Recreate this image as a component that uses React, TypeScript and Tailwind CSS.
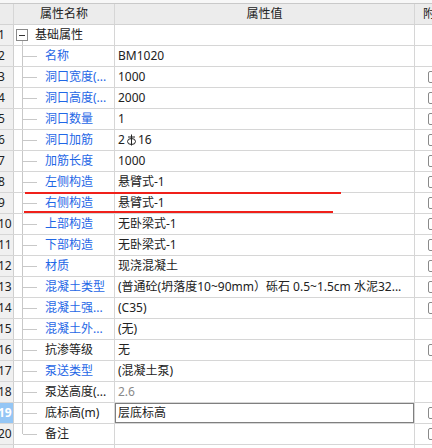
import React from "react";

type Row = {
    name: string;
    value?: React.ReactNode;
    blue?: boolean;
    muted?: boolean;
    check?: boolean;
};

const rows: Row[] = [
    { name: "名称", value: "BM1020", blue: true },
    { name: "洞口宽度(...", value: "1000", blue: true, check: true },
    { name: "洞口高度(...", value: "2000", blue: true, check: true },
    { name: "洞口数量", value: "1", blue: true, check: true },
    { name: "洞口加筋", value: "rebar", blue: true, check: true },
    { name: "加筋长度", value: "1000", blue: true, check: true },
    { name: "左侧构造", value: "悬臂式-1", blue: true, check: true },
    { name: "右侧构造", value: "悬臂式-1", blue: true, check: true },
    { name: "上部构造", value: "无卧梁式-1", blue: true, check: true },
    { name: "下部构造", value: "无卧梁式-1", blue: true, check: true },
    { name: "材质", value: "现浇混凝土", blue: true, check: true },
    { name: "混凝土类型", value: "(普通砼(坍落度10~90mm）砾石 0.5~1.5cm 水泥32...", blue: true, check: true },
    { name: "混凝土强...", value: "(C35)", blue: true, check: true },
    { name: "混凝土外...", value: "(无)", blue: true },
    { name: "抗渗等级", value: "无", check: true },
    { name: "泵送类型", value: "(混凝土泵)", blue: true },
    { name: "泵送高度(...", value: "2.6", muted: true },
    { name: "底标高(m)", value: "层底标高", check: true },
    { name: "备注", value: "", check: true },
];

// HRB400 rebar grade mark
const RebarMark = () => (
    <svg width="11" height="12" viewBox="0 0 11 12" className="inline-block mx-[1px] -mt-[2px] align-middle">
        <line x1="5.5" y1="0.5" x2="5.5" y2="11.5" stroke="#222" strokeWidth="1" />
        <line x1="2" y1="3" x2="9" y2="3" stroke="#222" strokeWidth="1" />
        <ellipse cx="5.5" cy="7.5" rx="4" ry="3" fill="none" stroke="#222" strokeWidth="1" />
    </svg>
);

const Checkbox = () => <div className="w-[12px] h-[12px] border border-[#8a8a8a] rounded-[2px] bg-white shrink-0" />;

const NumCell = ({ n, active }: { n?: number; active?: boolean }) => (
    <div
        className={`w-[14px] shrink-0 overflow-hidden border-r border-[#cfcfcf] flex items-center ${
            active ? "bg-[#94c6f5] text-white font-bold" : "bg-[#f0f0f0] text-[#222]"
        }`}
    >
        <span className="-ml-[2px] whitespace-nowrap">{n}</span>
    </div>
);

export default function App() {
    return (
        <div
            className="relative w-[432px] h-[448px] overflow-hidden bg-white text-[12px] leading-[20px]"
            style={{ fontFamily: '"Noto Sans", "Noto Sans CJK SC", sans-serif' }}
        >
            <div className="h-[3px] bg-[#f7f7f7] border-b border-[#c9c9c9] box-content" />

            {/* header */}
            <div className="flex h-[21px] bg-[#ececec] border-b border-[#d3d3d3] text-[#222]">
                <div className="w-[14px] shrink-0 border-r border-[#d6d6d6]" />
                <div className="w-[101px] shrink-0 border-r border-[#d6d6d6] text-center">属性名称</div>
                <div className="w-[300px] shrink-0 border-r border-[#d6d6d6] text-center">属性值</div>
                <div className="flex-1 pl-[8px] whitespace-nowrap">附加</div>
            </div>

            {/* group row */}
            <div className="flex h-[21px] border-b border-[#d6d6d6]">
                <NumCell n={1} />
                <div className="w-[101px] shrink-0 border-r border-[#d6d6d6] flex items-center text-[#222]">
                    <div className="w-[12px] ml-[2px] self-stretch flex flex-col items-center">
                        <div className="flex-1" />
                        <div className="w-[12px] h-[12px] border border-[#8a8a8a] bg-white flex items-center justify-center">
                            <div className="w-[6px] h-px bg-[#333]" />
                        </div>
                        <div className="flex-1 w-px bg-[#c8c8c8]" />
                    </div>
                    <span className="ml-[7px]">基础属性</span>
                </div>
                <div className="w-[300px] shrink-0 border-r border-[#d6d6d6]" />
                <div className="flex-1" />
            </div>

            {rows.map((r, i) => {
                const num = i + 2;
                const last = i === rows.length - 1;
                const selected = num === 19;
                return (
                    <div key={num} className="flex h-[21px] border-b border-[#d6d6d6]">
                        <NumCell n={num} active={selected} />
                        <div className="w-[101px] shrink-0 border-r border-[#d6d6d6] flex items-stretch">
                            <div className="w-[8px] shrink-0" />
                            <div className="w-px shrink-0 flex flex-col">
                                <div className="flex-1 bg-[#c8c8c8]" />
                                <div className={`flex-1 ${last ? "" : "bg-[#c8c8c8]"}`} />
                            </div>
                            <div className="w-[14px] shrink-0 flex items-center">
                                <div className="w-full h-px bg-[#c8c8c8]" />
                            </div>
                            <span
                                className={`ml-[8px] whitespace-nowrap ${r.blue ? "text-[#1f67e6]" : "text-[#222]"}`}
                            >
                                {r.name}
                            </span>
                        </div>
                        <div
                            className={`relative w-[300px] shrink-0 border-r border-[#d6d6d6] pl-[3px] whitespace-nowrap overflow-hidden ${
                                r.muted ? "text-[#8a8a8a]" : "text-[#222]"
                            }`}
                        >
                            {r.value === "rebar" ? (
                                <span>
                                    2<RebarMark />16
                                </span>
                            ) : (
                                r.value
                            )}
                            {selected && (
                                <div className="absolute -top-px -left-px -right-px -bottom-px border-2 border-[#7f7f7f]" />
                            )}
                        </div>
                        <div className="flex-1 flex items-center pl-[13px]">{r.check && <Checkbox />}</div>
                    </div>
                );
            })}

            {/* partial next row */}
            <div className="flex h-[21px]">
                <NumCell />
                <div className="w-[101px] shrink-0 border-r border-[#d6d6d6]" />
                <div className="w-[300px] shrink-0 border-r border-[#d6d6d6]" />
                <div className="flex-1" />
            </div>

            {/* red annotation strokes */}
            <div className="absolute left-[25px] top-[192px] w-[316px] h-[2px] bg-[#f0201a]" />
            <div className="absolute left-[24px] top-[211px] w-[309px] h-[2px] bg-[#f0201a]" />
        </div>
    );
}
